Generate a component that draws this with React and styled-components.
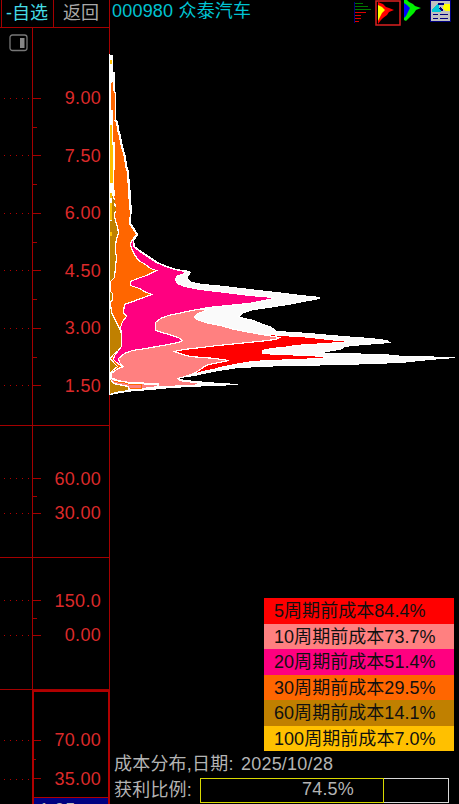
import React from "react";
import styled, { createGlobalStyle } from "styled-components";

const GlobalStyle = createGlobalStyle`
  * {
    box-sizing: border-box;
  }

  body {
    margin: 0;
    background: #000;
    overflow: hidden;
    font-family: "Liberation Sans", "Noto Sans CJK SC", sans-serif;
    font-size: 18px;
    font-weight: 400;
  }
`;

const Screen = styled.div`
  display: flex;
  width: 459px;
  height: 804px;
  overflow: hidden;
  background: #000;
`;

const Sidebar = styled.aside`
  display: flex;
  flex-direction: column;
  flex: 0 0 110px;
  height: 804px;
  overflow: hidden;
`;

const Menu = styled.nav`
  display: flex;
  flex: none;
  height: 28px;
  padding-left: 1px;
  border-bottom: 1px solid #a40000;
  border-right: 1px solid #a40000;
`;

const MenuItem = styled.div`
  width: ${({ $width }) => $width}px;
  border-left: 1px solid #a40000;
  padding-left: ${({ $indent }) => $indent}px;
  line-height: 26px;
  white-space: nowrap;
  color: ${({ $color }) => $color};
`;

const Pane = styled.section`
  height: ${({ $height }) => $height}px;
  flex: none;
  padding-top: ${({ $top }) => $top}px;
  border-bottom: 1px solid #a40000;
  border-right: 1px solid #a40000;
  background: linear-gradient(#a40000, #a40000) 32px 0 / 1px 100% no-repeat;
`;

const ActivePane = styled.section`
  display: grid;
  grid-template-columns: 32px 78px;
  flex: 1;
  min-height: 0;
`;

const ActiveFrame = styled.div`
  border: 2px solid #b00000;
  border-bottom: none;
`;

const Gutter = styled.div`
  padding-top: ${({ $top }) => $top}px;
`;

const ToggleBox = styled.div`
  height: ${({ $height }) => $height}px;
  padding: 6px 0 0 9px;
`;

const TickRow = styled.div`
  display: flex;
  align-items: center;
  height: ${({ $height }) => $height}px;
`;

const Dots = styled.div`
  width: 32px;
  height: 1px;
  background: repeating-linear-gradient(
      90deg,
      #b40000 0 1px,
      transparent 1px 6px
    )
    4px 0 / 25px 1px no-repeat;
`;

const Major = styled.div`
  width: ${({ $width }) => $width || 9}px;
  height: 1px;
  background: #a40000;
`;

const Minor = styled.div`
  width: ${({ $width }) => $width || 4}px;
  height: 1px;
  margin-left: ${({ $left }) => $left}px;
  background: #a40000;
`;

const TickLabel = styled.span`
  flex: 1;
  padding-right: ${({ $right }) => $right || 8}px;
  text-align: right;
  line-height: 20px;
  letter-spacing: 0.3px;
  color: #dc2a2a;
`;

const Cursor = styled.div`
  height: 20px;
  padding: 1px 0 0 5px;
  border-top: 1px solid #b00000;
  background: #000080;
  line-height: 22px;
  letter-spacing: 0.4px;
  color: #b8b8b8;
`;

const Main = styled.main`
  display: flex;
  flex-direction: column;
  flex: 1;
  min-width: 0;
`;

const Header = styled.header`
  display: flex;
  justify-content: space-between;
  height: 28px;
  padding: 0 8px 0 2px;
`;

const StockName = styled.h1`
  margin: 0;
  font-size: 18px;
  font-weight: 400;
  line-height: 22px;
  letter-spacing: 0.2px;
  white-space: pre;
  color: #00c3d2;
`;

const Tools = styled.div`
  display: flex;
  align-items: flex-start;
`;

const ChartBox = styled.div`
  height: 570px;
  margin-left: -1px;
`;

const Legend = styled.ul`
  width: 190px;
  height: 153px;
  margin: 0 5px 0 auto;
  padding: 0;
  list-style: none;
`;

const LegendItem = styled.li`
  height: 25.5px;
  padding-left: 10px;
  line-height: 26px;
  letter-spacing: 0.05px;
  color: #101010;
  background: ${({ $color }) => $color};
`;

const Info = styled.div`
  display: flex;
  align-items: center;
  height: 26px;
  padding-left: 4px;
  letter-spacing: 0.2px;
  white-space: pre;
  color: #b4b4b4;
`;

const InfoLabel = styled.span`
  width: ${({ $width }) => $width}px;
  margin-top: -4px;
`;

const Gauge = styled.div`
  display: flex;
  width: 249px;
  height: 25px;
  border: 1px solid #d8d8d8;
  border-left: none;
`;

const GaugeFill = styled.div`
  display: flex;
  align-items: center;
  width: 184px;
  margin: -1px 0;
  padding: 0 0 2px 101px;
  border: 1px solid #d8d800;
  letter-spacing: 0.2px;
`;

// [y, x] points along the right edge of every cost layer
const LAYERS = [
  {
    color: "#fafafa",
    edge: [
      [55, 112], [72, 112], [72, 114], [92, 114], [92, 115], [120, 115],
      [121, 117], [129, 118], [136, 120], [146, 122], [157, 125], [165, 126],
      [172, 128], [189, 129], [190, 130], [204, 130], [205, 131], [213, 131],
      [214, 130], [223, 130], [229, 134], [234, 137], [240, 133], [246, 134],
      [250, 139], [254, 145], [258, 151], [262, 157], [266, 166], [269, 176],
      [271, 189], [272, 190], [276, 187], [279, 187], [282, 191], [284, 201],
      [286, 224], [288, 240], [290, 257], [292, 275], [295, 300], [297, 319],
      [298, 319], [300, 308], [303, 293], [306, 274], [309, 253], [312, 243],
      [316, 238], [318, 243], [320, 253], [323, 260], [327, 271], [331, 276],
      [333, 308], [335, 330], [337, 354], [338, 370], [340, 386], [342, 389],
      [344, 363], [346, 343], [348, 342], [350, 333], [352, 318], [353, 328],
      [354, 382], [356, 402], [357, 454], [358, 440], [360, 418], [362, 400],
      [363, 367], [364, 345], [365, 282], [367, 237], [370, 218], [373, 202],
      [375, 194], [377, 179], [379, 178], [381, 194], [383, 218], [384, 237],
      [385, 208], [387, 169], [389, 150], [390, 133], [392, 119], [393, 114],
      [394, 109],
    ],
  },
  {
    color: "#ff0000",
    edge: [
      [334, 270], [335, 281], [336, 300], [338, 320], [340, 338], [341, 352],
      [343, 326], [345, 295], [347, 283], [348, 271], [350, 262], [353, 262],
      [354, 280], [355, 310], [357, 333], [359, 300], [360, 270], [361, 253],
      [363, 240], [366, 224], [369, 213], [371, 203], [373, 196], [374, 190],
    ],
  },
  {
    color: "#ff8080",
    edge: [
      [308, 195], [309, 207], [311, 203], [313, 197], [316, 194], [319, 196],
      [322, 205], [325, 220], [329, 234], [332, 250], [335, 267], [337, 279],
      [339, 275], [341, 258], [343, 238], [345, 217], [347, 201], [349, 183],
      [351, 174], [354, 182], [356, 190], [358, 215], [360, 228], [362, 219],
      [364, 208], [366, 204], [369, 200], [372, 195], [375, 188], [378, 177],
      [380, 179], [382, 194], [384, 206], [386, 167], [388, 140],
    ],
  },
  {
    color: "#ff0080",
    edge: [
      [235, 130], [240, 133], [246, 133], [250, 138], [254, 144], [258, 150],
      [262, 156], [266, 165], [269, 175], [271, 185], [273, 184], [276, 176],
      [279, 175], [283, 177], [286, 184], [289, 200], [291, 217], [293, 233],
      [295, 250], [297, 273], [298, 273], [301, 259], [303, 248], [305, 227],
      [307, 208], [309, 197], [312, 182], [315, 168], [318, 160], [322, 155],
      [330, 155], [333, 165], [337, 178], [340, 182], [342, 178], [345, 162],
      [348, 145], [350, 132], [353, 124], [358, 118], [362, 119], [366, 123],
      [369, 116], [373, 111], [377, 110],
    ],
  },
  {
    color: "#ff6600",
    edge: [
      [82, 112], [93, 114], [120, 114], [121, 116], [129, 117], [136, 119],
      [146, 121], [157, 124], [165, 125], [172, 127], [189, 128], [204, 129],
      [213, 130], [223, 129], [229, 133], [234, 136], [239, 132], [243, 130],
      [248, 131], [254, 134], [260, 138], [264, 145], [268, 150], [270, 156],
      [272, 152], [275, 146], [278, 137], [281, 130], [285, 130], [288, 139],
      [291, 144], [294, 151], [296, 146], [300, 135], [304, 124], [312, 123],
      [316, 126], [321, 122], [327, 120], [333, 121], [345, 121], [350, 118],
      [355, 114], [359, 113], [362, 116], [366, 122], [369, 116], [373, 111],
      [378, 111],
    ],
  },
  {
    color: "#c08000",
    edge: [
      [195, 113], [200, 114], [209, 115], [215, 114], [221, 115], [226, 117],
      [233, 118], [238, 116], [245, 115], [251, 115], [257, 116], [266, 115],
      [277, 114], [281, 110], [291, 110], [293, 112], [299, 112], [302, 110],
      [312, 111], [316, 113], [322, 116], [328, 119], [333, 121], [346, 121],
      [350, 118], [354, 113], [358, 110], [362, 113], [366, 117], [370, 112],
      [373, 110], [379, 110], [383, 113], [386, 128], [390, 128], [392, 115],
      [394, 110],
    ],
  },
];

const layerPoints = (edge) => {
  const first = edge[0][0];
  const last = edge[edge.length - 1][0];
  const right = edge.map(([y, x]) => `${x + 0.5},${y + 0.5}`).join(" ");
  return `109.5,${first} ${right} 109.5,${last}`;
};

const LEGEND = [
  { color: "#ff0000", text: "5周期前成本84.4%" },
  { color: "#ff8080", text: "10周期前成本73.7%" },
  { color: "#ff0080", text: "20周期前成本51.4%" },
  { color: "#ff6600", text: "30周期前成本29.5%" },
  { color: "#c08000", text: "60周期前成本14.1%" },
  { color: "#ffc000", text: "100周期前成本7.0%" },
];

const CostChart = () => (
  <svg
    width="350"
    height="570"
    viewBox="109 28 350 570"
    shapeRendering="crispEdges"
    display="block"
  >
    <path d="M109.5 28V55" stroke="#a40000" />
    <path d="M109.5 394V598" stroke="#a40000" />
    {LAYERS.map(({ color, edge }) => (
      <polygon
        key={color}
        points={layerPoints(edge)}
        fill={color}
        stroke="#fff"
        strokeWidth="1.2"
      />
    ))}
    <path
      d="M109 55H113V82H111V110H113V142H115V170H113.5V190H114.5V204H115V196H112V221H109Z"
      fill="#fff"
    />
    <path
      d="M110 60h1.5v4h-1.5zM110 125h2v20h1v38h-3zM110 193h2v5h-2zM110 203h2v17h-2zM110 232h2v4h-2z"
      fill="#ffc000"
    />
    <path d="M112 82h1v11h2v27h-1v-10h-2z" fill="#ff6600" />
    <path d="M113 200h1.5v3h-1.5zM114 207h1.5v4h-1.5z" fill="#c08000" />
    <path d="M111 378L118 381L130 383L158 384V387L142 389H128" fill="none" stroke="#fff" strokeWidth="2" />
    <path d="M114 381L118 382L128 383.5M129 384.5H141V388H130" fill="none" stroke="#ff6600" />
    <path d="M109.5 55V394" stroke="#fff" />
  </svg>
);

const BarsIcon = () => (
  <svg width="22" height="25" shapeRendering="crispEdges">
    <path d="M1.5 2V23" stroke="#000080" />
    <path d="M2 3.5h8M2 6.5h13M2 9.5h16" stroke="#007800" />
    <path d="M2 12.5h11M2 15.5h6M2 18.5h6M2 21.5h4" stroke="#e00000" />
  </svg>
);

const RedPeakIcon = () => (
  <svg width="26" height="26">
    <rect x="1" y="1" width="24" height="24" fill="none" stroke="#dc2020" strokeWidth="1.5" />
    <path d="M3 2L8 4L11 7L14 8L19 10L14 12L12 15L8 18L6 20L3 24Z" fill="#ff0000" />
    <path d="M3 5L7 7L10 10L7 13L5 17L3 21Z" fill="#ffff00" />
  </svg>
);

const GreenPeakIcon = () => (
  <svg width="29" height="25">
    <path d="M3 0H6L8 2L12 4L14 6L20 8L15 10L13 13L9 17L5 21L3 20Z" fill="#00f000" />
    <path d="M3 3L6 5L9 8L7 12L5 16L3 18Z" fill="#0000ff" />
  </svg>
);

const ReportIcon = () => (
  <svg width="21" height="22" shapeRendering="crispEdges">
    <rect x="0.5" y="0.5" width="20" height="21" fill="#c0c0c0" stroke="#000080" />
    <path d="M2 11L3 8L9 3V8L11 10V12H2Z" fill="#00c8d8" />
    <path d="M14 4H20V11H15L13 8Z" fill="#ffff00" />
    <path d="M8 3.5H14M10 8L13 11" stroke="#000080" strokeWidth="2" />
    <path d="M3 14.5H8M10 14.5H18M3 18.5H8M10 18.5H18" stroke="#000080" />
  </svg>
);

const Ticks = ({ labels, step }) =>
  labels.map((label, i) => (
    <React.Fragment key={label}>
      {i > 0 && <Minor $left={33} />}
      <TickRow $height={step - 1}>
        <Dots />
        <Major />
        <TickLabel>{label}</TickLabel>
      </TickRow>
    </React.Fragment>
  ));

const App = () => {
  return (
    <>
      <GlobalStyle />
      <Screen>
        <Sidebar>
          <Menu>
            <MenuItem $width={52} $indent={4} $color="#45dce4">
              -自选
            </MenuItem>
            <MenuItem $width={56} $indent={9} $color="#a8a8a8">
              返回
            </MenuItem>
          </Menu>
          <Pane $height={398} $top={0}>
            <ToggleBox $height={42}>
              <svg width="19" height="18">
                <rect x="1" y="1" width="17" height="15.5" rx="2.5" fill="none" stroke="#777" strokeWidth="1.3" />
                <rect x="11" y="4" width="4.5" height="10" fill="#888" />
              </svg>
            </ToggleBox>
            <Ticks labels={["9.00", "7.50", "6.00", "4.50", "3.00", "1.50"]} step={57.5} />
          </Pane>
          <Pane $height={132} $top={36}>
            <Ticks labels={["60.00", "30.00"]} step={34.5} />
          </Pane>
          <Pane $height={132} $top={26}>
            <Ticks labels={["150.0", "0.00"]} step={34.5} />
          </Pane>
          <ActivePane>
            <Gutter $top={31}>
              <TickRow $height={39}>
                <Dots />
              </TickRow>
              <TickRow $height={39}>
                <Dots />
              </TickRow>
            </Gutter>
            <ActiveFrame>
              <Gutter $top={29}>
                <TickRow $height={38}>
                  <Major $width={7} />
                  <TickLabel $right={7}>70.00</TickLabel>
                </TickRow>
                <Minor $left={0} $width={2} />
                <TickRow $height={37}>
                  <Major $width={7} />
                  <TickLabel $right={7}>35.00</TickLabel>
                </TickRow>
              </Gutter>
              <Cursor>1.95</Cursor>
            </ActiveFrame>
          </ActivePane>
        </Sidebar>
        <Main>
          <Header>
            <StockName>000980 众泰汽车</StockName>
            <Tools>
              <BarsIcon />
              <RedPeakIcon />
              <GreenPeakIcon />
              <ReportIcon />
            </Tools>
          </Header>
          <ChartBox>
            <CostChart />
          </ChartBox>
          <Legend>
            {LEGEND.map(({ color, text }) => (
              <LegendItem key={color} $color={color}>
                {text}
              </LegendItem>
            ))}
          </Legend>
          <Info>
            <InfoLabel $width={127}>成本分布,日期:</InfoLabel>
            <span>2025/10/28</span>
          </Info>
          <Info>
            <InfoLabel $width={86}>获利比例:</InfoLabel>
            <Gauge>
              <GaugeFill>74.5%</GaugeFill>
            </Gauge>
          </Info>
        </Main>
      </Screen>
    </>
  );
};

export default App;
